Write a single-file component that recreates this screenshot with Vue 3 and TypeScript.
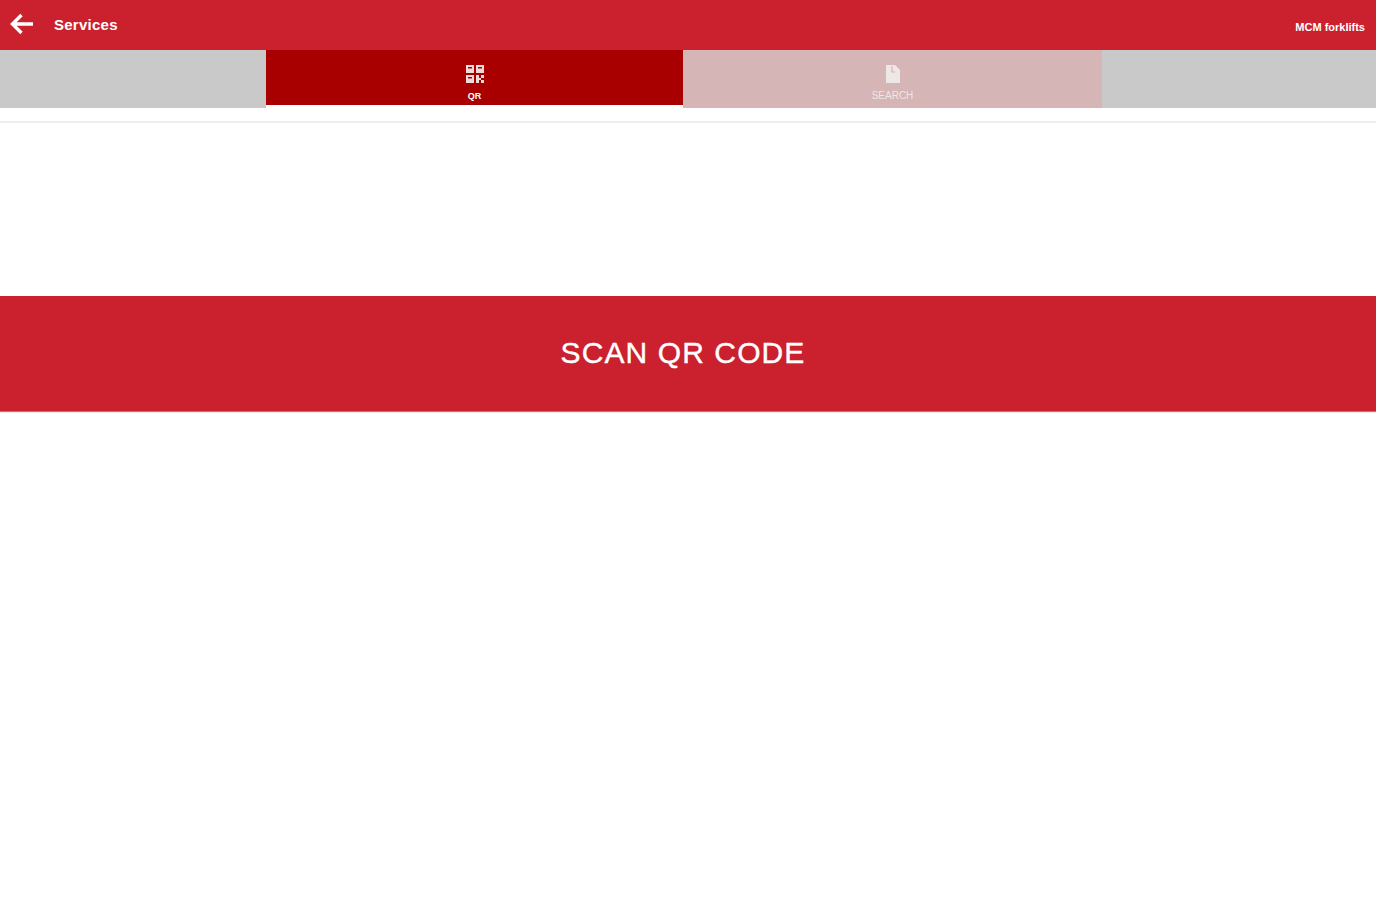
<script setup lang="ts">
const title: string = 'Services'
</script>

<template>
  <div class="page">
    <header class="bar">
      <svg class="back" width="26" height="24" viewBox="0 0 26 24" aria-hidden="true">
        <path d="M12.5 3 L3.5 12 L12.5 21 M4 12 H24" fill="none" stroke="#fff" stroke-width="3.4" />
      </svg>
      <span class="title">{{ title }}</span>
      <span class="brand">MCM forklifts</span>
    </header>
    <nav class="tabs">
      <div class="filler left"></div>
      <div class="tab active">
        <svg width="20" height="20" viewBox="0 0 20 20" aria-hidden="true">
          <g fill="#efd9d9">
            <rect x="1" y="1" width="8" height="8" />
            <rect x="11" y="1" width="8" height="8" />
            <rect x="1" y="11" width="8" height="8" />
            <path d="M11 11h3v3h2v-3h3v3h-3v2h3v3h-3v-3h-2v3h-3z" />
          </g>
          <g fill="#a80000">
            <rect x="3" y="3" width="4" height="1.5" />
            <rect x="13" y="3" width="4" height="1.5" />
            <rect x="3" y="13" width="4" height="1.5" />
          </g>
        </svg>
        <span class="tab-label">QR</span>
      </div>
      <div class="tab idle">
        <svg width="18" height="20" viewBox="0 0 18 20" aria-hidden="true">
          <path d="M2 1h9l5 5v13H2z" fill="#efe6e6" />
          <path d="M8 2v6h3" fill="none" stroke="#d5b5b5" stroke-width="1.2" />
        </svg>
        <span class="tab-label">SEARCH</span>
      </div>
      <div class="filler right"></div>
    </nav>
    <div class="rule"></div>
    <button class="scan" type="button">SCAN QR CODE</button>
  </div>
</template>

<style>
body {
  background: #fff;
}
</style>

<style scoped>
.page {
  height: 900px;
  overflow: hidden;
  background: #fff;
  font-family: "Liberation Sans", Arial, sans-serif;
}
.bar {
  height: 50px;
  display: flex;
  align-items: center;
  padding: 0 11px 0 9px;
  box-sizing: border-box;
  background: #cb202d;
  color: #fff;
}
.back {
  margin-top: -3px;
}
.title {
  margin-left: 19px;
  margin-top: -2px;
  font-size: 15px;
  font-weight: 700;
  letter-spacing: 0.25px;
}
.brand {
  margin-left: auto;
  margin-top: 4px;
  font-size: 11px;
  font-weight: 700;
}
.tabs {
  height: 58px;
  display: flex;
  align-items: flex-start;
}
.filler {
  height: 58px;
  background: #c9c9c9;
}
.left {
  width: 266px;
}
.right {
  width: 274px;
}
.tab {
  display: flex;
  flex-direction: column;
  align-items: center;
  box-sizing: border-box;
  padding-top: 14px;
}
.active {
  width: 417px;
  height: 55px;
  background: #a80000;
  color: #fff;
}
.idle {
  width: 419px;
  height: 58px;
  background: #d5b5b5;
  color: #efe6e6;
}
.tab-label {
  margin-top: 7px;
  font-size: 9px;
  line-height: 10px;
  font-weight: 700;
}
.idle .tab-label {
  font-size: 10px;
  font-weight: 400;
}
.rule {
  height: 2px;
  margin-top: 13px;
  background: #eeeeee;
}
.scan {
  display: block;
  width: 100%;
  height: 115px;
  margin: 173px 0 0;
  border: 0;
  padding: 0 10px 2px 0;
  background: #cb202d;
  box-shadow: 0 1px 1px rgba(0, 0, 0, 0.45);
  color: #fff;
  font-family: inherit;
  font-size: 30px;
  letter-spacing: 1.1px;
  -webkit-text-stroke: 0.4px #fff;
}
</style>
